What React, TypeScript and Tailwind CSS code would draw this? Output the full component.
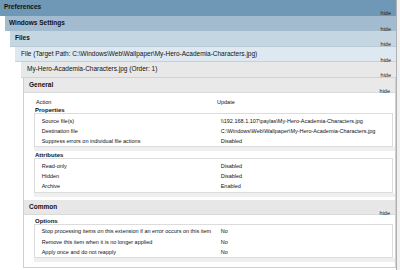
import React from "react";

function Bar({
  title,
  bg,
  pl,
  bold = true,
  border,
}: {
  title: string;
  bg: string;
  pl: string;
  bold?: boolean;
  border?: string;
}) {
  return (
    <div className={`h-[15.5px] ${bg} ${pl} pr-[5px] pt-[3px] flex flex-col ${border ?? ""}`}>
      <div className={`leading-[7px] text-[6.5px] whitespace-nowrap text-[#111] ${bold ? "font-bold" : "font-normal"}`}>
        {title}
      </div>
      <div className="self-end leading-[6px] text-[5.5px] text-[#222]">hide</div>
    </div>
  );
}

function Row({ label, value }: { label: string; value: string }) {
  return (
    <div className="grid grid-cols-[179px_1fr] leading-[10.3px] text-[5.5px] text-[#111] whitespace-nowrap">
      <div>{label}</div>
      <div>{value}</div>
    </div>
  );
}

function Group({ title, rows }: { title: string; rows: [string, string][] }) {
  return (
    <div className="ml-[10px]">
      <div className="pl-[1px] leading-[5px] text-[6px] font-bold text-[#111]">{title}</div>
      <div className="mr-[2px] border border-[#dcdcdc] bg-white pl-[6.7px] pt-[1.5px]">
        {rows.map(([l, v]) => (
          <Row key={l} label={l} value={v} />
        ))}
      </div>
      <div className="h-[4px] bg-[#efefef]" />
    </div>
  );
}

export default function App() {
  return (
    <div className="w-[400px] h-[270px] overflow-hidden bg-white flex font-['Liberation_Sans',Arial,sans-serif]">
      <div className="w-[396px] shrink-0">
        <Bar title="Preferences" bg="bg-[#6f97b6]" pl="pl-[4px]" />
        <div className="ml-[5px]">
          <Bar title="Windows Settings" bg="bg-[#a2bbcf]" pl="pl-[4px]" />
          <div className="ml-[5px]">
            <Bar title="Files" bg="bg-[#c5d6e3]" pl="pl-[5px]" border="border-b border-[#b9c9d6]" />
            <div className="ml-[5px]">
              <Bar
                title="File (Target Path: C:\Windows\Web\Wallpaper\My-Hero-Academia-Characters.jpg)"
                bg="bg-[#dee8f0]"
                pl="pl-[6px]"
                bold={false}
                border="border-b border-[#c9d1d8]"
              />
              <div className="ml-[6px]">
                <Bar
                  title="My-Hero-Academia-Characters.jpg (Order: 1)"
                  bg="bg-[#e8e8e8]"
                  pl="pl-[6px]"
                  bold={false}
                  border="border-b border-[#d2d2d2]"
                />
                <div className="ml-[2px] border-l border-b border-r border-[#cfcfcf] h-[190px]">
                  <Bar title="General" bg="bg-[#e9e9e9]" pl="pl-[5px]" border="border-b border-[#dadada]" />
                  <div className="pt-[4px]">
                    <div className="ml-[12px] grid grid-cols-[181px_1fr] leading-[10px] text-[5.5px] text-[#111]">
                      <div>Action</div>
                      <div>Update</div>
                    </div>
                    <div className="mt-[1px]">
                      <Group
                        title="Properties"
                        rows={[
                          ["Source file(s)", "\\\\192.168.1.107\\paylas\\My-Hero-Academia-Characters.jpg"],
                          ["Destination file", "C:\\Windows\\Web\\Wallpaper\\My-Hero-Academia-Characters.jpg"],
                          ["Suppress errors on individual file actions", "Disabled"],
                        ]}
                      />
                    </div>
                    <div className="mt-[2px]">
                      <Group
                        title="Attributes"
                        rows={[
                          ["Read-only", "Disabled"],
                          ["Hidden", "Disabled"],
                          ["Archive", "Enabled"],
                        ]}
                      />
                    </div>
                  </div>
                  <div className="mt-[3px]">
                    <Bar title="Common" bg="bg-[#e7e7e7]" pl="pl-[5px]" border="border-b border-[#dadada]" />
                    <div className="mt-[3.7px]">
                      <Group
                        title="Options"
                        rows={[
                          ["Stop processing items on this extension if an error occurs on this item", "No"],
                          ["Remove this item when it is no longer applied", "No"],
                          ["Apply once and do not reapply", "No"],
                        ]}
                      />
                    </div>
                  </div>
                </div>
              </div>
            </div>
          </div>
        </div>
      </div>
      <div className="w-[1px] bg-[#b0b0b0]" />
      <div className="flex-1 bg-[#f0f0f0]" />
    </div>
  );
}
